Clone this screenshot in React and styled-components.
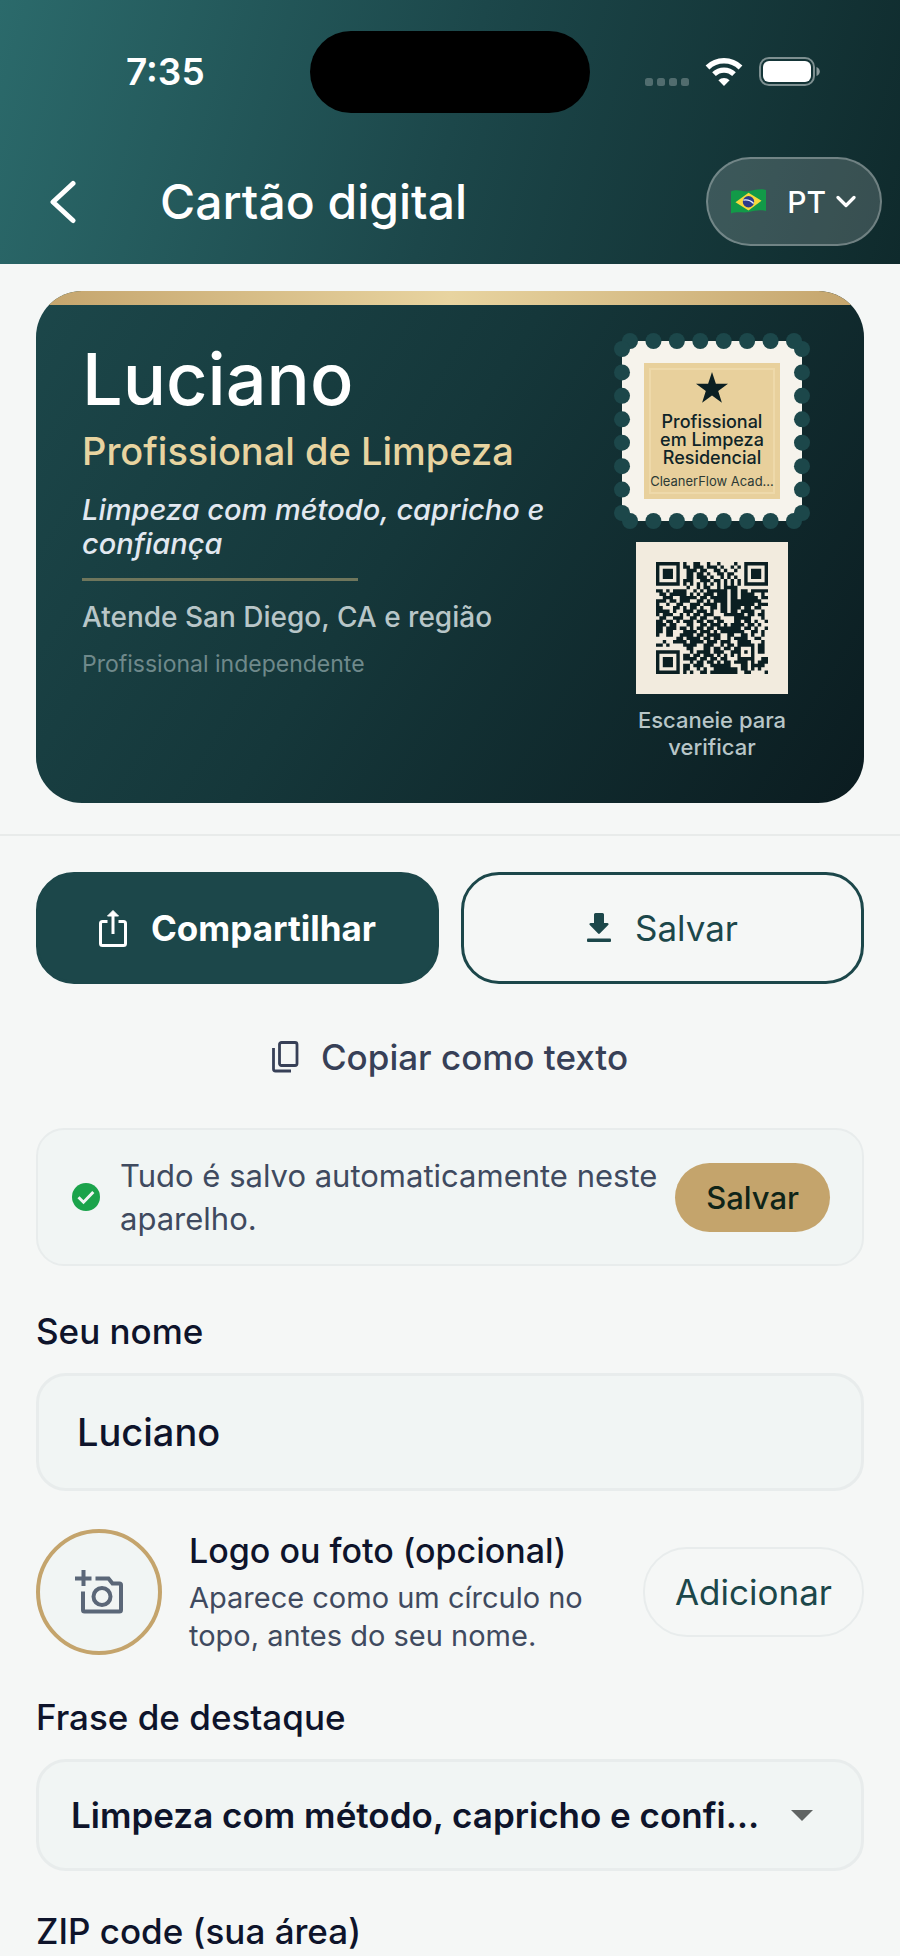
import React from "react";
import styled, { createGlobalStyle } from "styled-components";

const GlobalStyle = createGlobalStyle`
  * {
    box-sizing: border-box;
  }

  body {
    margin: 0;
    background: #f5f7f6;
    color: #0e142b;
    font-family: Inter, "Liberation Sans", sans-serif;
  }

  button,
  input,
  select {
    font-family: inherit;
    color: inherit;
    margin: 0;
  }

  button {
    cursor: pointer;
  }

  svg {
    display: block;
    flex-shrink: 0;
  }
`;

/* ---------- Header ---------- */

const Header = styled.header`
  padding: 31px 0 18px;
  color: #fff;
  background: linear-gradient(106deg, #2b6a6b 0%, #1c474a 50%, #0f2a2c 100%);
`;

const StatusBar = styled.div`
  display: grid;
  grid-template-columns: 1fr 280px 1fr;
  align-items: center;
  margin-bottom: 44px;
`;

const Clock = styled.time`
  padding-left: 126px;
  font-size: 37px;
  font-weight: 600;
  line-height: 44px;
`;

const Island = styled.div`
  height: 82px;
  border-radius: 41px;
  background: #000;
`;

const StatusIcons = styled.div`
  display: flex;
  align-items: center;
  justify-content: flex-end;
  gap: 16px;
  padding-right: 80px;
`;

const NavBar = styled.nav`
  display: flex;
  align-items: center;
  height: 89px;
  padding: 0 18px 0 48px;
`;

const BackButton = styled.button`
  display: flex;
  padding: 0;
  border: 0;
  background: none;
`;

const PageTitle = styled.h1`
  flex: 1;
  margin: 0 0 0 80px;
  font-size: 48px;
  font-weight: 500;
  line-height: 60px;
`;

const LanguageButton = styled.button`
  display: flex;
  align-items: center;
  height: 89px;
  padding: 0 24px 0 22px;
  border: 2px solid rgba(255, 255, 255, 0.28);
  border-radius: 45px;
  background: rgba(255, 255, 255, 0.17);
  color: #fff;
  font-size: 30px;
  font-weight: 500;

  span {
    margin: 0 10px 0 20px;
  }
`;

/* ---------- Business card ---------- */

const CardArea = styled.section`
  padding: 27px 36px 31px;
  border-bottom: 2px solid #e8ebea;
`;

const Card = styled.article`
  overflow: hidden;
  border-radius: 46px;
  background: linear-gradient(122deg, #1c474a 0%, #15373a 45%, #0b1c20 100%);

  &::before {
    content: "";
    display: block;
    height: 14px;
    background: linear-gradient(90deg, #c4a46c, #e8d4a0, #c4a46c);
  }
`;

const CardContent = styled.div`
  display: flex;
  justify-content: space-between;
  padding: 28px 46px 42px;
`;

const CardInfo = styled.div`
  flex: 1;
  min-width: 0;
`;

const CardName = styled.h2`
  margin: 0;
  color: #fff;
  font-size: 72px;
  font-weight: 500;
  line-height: 91px;
`;

const CardRole = styled.p`
  margin: 0;
  color: #e8d4a0;
  font-size: 38px;
  font-weight: 500;
  line-height: 54px;
`;

const CardTagline = styled.p`
  margin: 15px 0 17px;
  color: #e2e8f0;
  font-size: 29px;
  font-style: italic;
  font-weight: 500;
  line-height: 34px;
`;

const CardRule = styled.hr`
  width: 276px;
  height: 3px;
  margin: 0;
  border: 0;
  background: #6f765c;
`;

const CardRegion = styled.p`
  margin: 18px 0 15px;
  color: #b8c6c8;
  font-size: 28px;
  font-weight: 500;
  line-height: 36px;
`;

const CardNote = styled.p`
  margin: 0;
  color: #6f898b;
  font-size: 23px;
  line-height: 28px;
`;

const CardProof = styled.div`
  display: flex;
  flex-direction: column;
  align-items: center;
  gap: 13px;
  width: 212px;
`;

const StampBox = styled.div`
  display: grid;
  place-items: center;

  > * {
    grid-area: 1 / 1;
  }
`;

const StampText = styled.div`
  display: flex;
  flex-direction: column;
  align-items: center;
  color: #0f2428;
  font-size: 18px;
  font-weight: 500;
  line-height: 18px;
  text-align: center;

  svg {
    margin-bottom: 10px;
  }

  small {
    margin-top: 5px;
    color: #2c3a35;
    font-size: 13px;
    font-weight: 400;
    white-space: nowrap;
  }
`;

const QrBox = styled.div`
  padding: 20px;
  background: #f2ebde;
`;

const QrCaption = styled.p`
  margin: 0;
  color: #b8c6c8;
  font-size: 22px;
  font-weight: 500;
  line-height: 27px;
  text-align: center;
`;

/* ---------- Actions and form ---------- */

const Content = styled.main`
  padding: 36px 36px 5px;
`;

const ActionRow = styled.div`
  display: grid;
  grid-template-columns: 1fr 1fr;
  gap: 22px;
`;

const ActionButton = styled.button`
  display: flex;
  align-items: center;
  justify-content: center;
  gap: 24px;
  height: 112px;
  border: 3px solid #1c474a;
  border-radius: 38px;
  background: ${({ $filled }) => ($filled ? "#1c474a" : "transparent")};
  color: ${({ $filled }) => ($filled ? "#fff" : "#1c474a")};
  font-size: 35px;
  font-weight: ${({ $filled }) => ($filled ? 700 : 400)};
`;

const CopyButton = styled.button`
  display: flex;
  align-items: center;
  justify-content: center;
  gap: 22px;
  height: 60px;
  margin: 43px auto 41px;
  padding: 0;
  border: 0;
  background: none;
  color: #374057;
  font-size: 35px;
  font-weight: 500;
`;

const SaveNotice = styled.div`
  display: flex;
  align-items: center;
  margin-bottom: 43px;
  padding: 24px 32px 24px 34px;
  border: 2px solid #e8ecec;
  border-radius: 28px;
  background: #f1f5f4;

  p {
    flex: 1;
    margin: 0 12px 0 20px;
    color: #3f4a5f;
    font-size: 31px;
    line-height: 43px;
  }
`;

const SaveButton = styled.button`
  height: 69px;
  padding: 0 31px;
  border: 0;
  border-radius: 35px;
  background: #c4a46c;
  color: #0f2418;
  font-size: 31px;
  font-weight: 500;
`;

const Field = styled.div`
  margin-bottom: 38px;
`;

const FieldLabel = styled.label`
  display: block;
  margin-bottom: 20px;
  font-size: 35px;
  font-weight: 500;
  line-height: 44px;
`;

const TextInput = styled.input`
  display: block;
  width: 100%;
  height: 118px;
  padding: 0 38px;
  border: 3px solid #e8ecec;
  border-radius: 30px;
  background: #f1f5f4;
  font-size: 38px;
  font-weight: 500;
`;

const SelectShell = styled.div`
  display: flex;
  align-items: center;
  padding-right: 48px;
  border: 3px solid #e8ecec;
  border-radius: 30px;
  background: #f1f5f4;
`;

const Select = styled.select`
  flex: 1;
  min-width: 0;
  height: 106px;
  margin-right: 22px;
  padding: 0 0 0 32px;
  appearance: none;
  border: 0;
  background: none;
  font-size: 35px;
  font-weight: 600;
  overflow: hidden;
  text-overflow: ellipsis;
  white-space: nowrap;
`;

const PhotoRow = styled.div`
  display: flex;
  align-items: center;
  margin-bottom: 40px;
`;

const PhotoCircle = styled.div`
  display: grid;
  place-items: center;
  flex-shrink: 0;
  width: 126px;
  height: 126px;
  border: 4px solid #c4a46c;
  border-radius: 50%;
  background: #f1f5f4;
`;

const PhotoText = styled.div`
  flex: 1;
  margin: 0 28px 0 27px;

  h3 {
    margin: 0 0 7px;
    font-size: 34px;
    font-weight: 500;
    line-height: 42px;
  }

  p {
    margin: 0;
    color: #3f4a5f;
    font-size: 29px;
    line-height: 38px;
  }
`;

const AddButton = styled.button`
  height: 90px;
  padding: 0 30px;
  border: 2px solid #e8ecec;
  border-radius: 44px;
  background: none;
  color: #1c474a;
  font-size: 35px;
`;

/* ---------- Drawings ---------- */

function SignalDots() {
  return (
    <svg width="44" height="28" viewBox="0 0 44 28" fill="#fff" opacity="0.25">
      {[0, 12, 24, 36].map((x) => (
        <rect key={x} x={x} y="20" width="8" height="8" rx="2.5" />
      ))}
    </svg>
  );
}

function WifiIcon() {
  return (
    <svg width="38" height="28" viewBox="0 0 38 28" fill="none" stroke="#fff">
      <path d="M2.5 9.5a23.5 23.5 0 0 1 33 0" strokeWidth="5.4" />
      <path d="M9 16.2a14.2 14.2 0 0 1 20 0" strokeWidth="5.2" />
      <path d="M19 28l-5.6-5.8a8 8 0 0 1 11.2 0z" fill="#fff" stroke="none" />
    </svg>
  );
}

function BatteryIcon() {
  return (
    <svg width="61" height="30" viewBox="0 0 61 30">
      <rect x="1" y="1" width="54" height="27" rx="9" fill="none" stroke="#fff" strokeOpacity="0.45" strokeWidth="2" />
      <rect x="4" y="4" width="48" height="21" rx="6" fill="#fff" />
      <path d="M57.5 10v9c2-.8 3.3-2.500 3.3-4.500s-1.3-3.700-3.3-4.500z" fill="#fff" fillOpacity="0.5" />
    </svg>
  );
}

function BackIcon() {
  return (
    <svg width="32" height="44" viewBox="0 0 32 44" fill="none" stroke="#fff" strokeWidth="5" strokeLinecap="round" strokeLinejoin="round">
      <path d="M25 3.5L5 22l20 18.500" />
    </svg>
  );
}

function BrazilFlag() {
  return (
    <svg width="37" height="27" viewBox="0 0 37 27">
      <path d="M1 3.5C8 .5 13 4.500 19 3.200S31 .5 36 2v21c-6-1.600-11-.4-17 1S8 23 1 25.500z" fill="#129a48" />
      <path d="M18.5 4.800L31.500 12.800 18.500 22.600 5.500 14.200z" fill="#f7d93c" />
      <circle cx="18.5" cy="13.7" r="5.7" fill="#2d3a8c" />
      <path d="M13.3 12.200c4-.8 7.500.4 10.300 3.300" fill="none" stroke="#e9eefc" strokeWidth="1.3" />
    </svg>
  );
}

function ChevronDown() {
  return (
    <svg width="20" height="13" viewBox="0 0 20 13" fill="none" stroke="#fff" strokeWidth="3.2" strokeLinecap="round" strokeLinejoin="round">
      <path d="M2 2.5l8 8 8-8" />
    </svg>
  );
}

function Stamp() {
  const step = 164 / 7;
  const holes = Array.from({ length: 8 }, (_, i) => 16 + i * step);

  return (
    <svg width="196" height="196" viewBox="0 0 196 196">
      <rect x="8" y="8" width="180" height="180" fill="#f6f3ec" />
      <rect x="30" y="30" width="136" height="136" fill="#e8d09c" />
      <rect x="36" y="36" width="124" height="124" fill="none" stroke="#eed9aa" strokeWidth="2" />
      <g fill="#1c474a">
        {holes.map((p) => (
          <g key={p}>
            <circle cx={p} cy="8" r="8" />
            <circle cx={p} cy="188" r="8" />
            <circle cx="8" cy={p} r="8" />
            <circle cx="188" cy={p} r="8" />
          </g>
        ))}
      </g>
    </svg>
  );
}

function StarIcon() {
  return (
    <svg width="32" height="31" viewBox="0 0 32 31" fill="#0b1f22">
      <path d="M16 0l3.900 11.700H32l-9.800 7.300 3.700 11.800L16 23.600 6.100 30.800 9.800 19 0 11.700h12.100z" />
    </svg>
  );
}

const QR_ROWS = [
  "111111101001100100100001001111111",
  "100000101101110111010010101000001",
  "101110100111011001101001001011101",
  "101110100110110100110110001011101",
  "101110100110111010010101001011101",
  "100000101110011101101010101000001",
  "111111101010101010101010101111111",
  "000000000100101100101111000000000",
  "110101111001010111111011011011111",
  "011011111010101110111011011110010",
  "001110011111011011111011011111011",
  "111011011100110101111011111111100",
  "100100110011101111011011111110111",
  "110001101011010011011011101101100",
  "111101001110111010011011011110010",
  "101110010101101110001111110110110",
  "011001110011011001100001111100010",
  "110110101110110110110001101101001",
  "111011000110011011101011110110100",
  "110111011010110110111111101101001",
  "110110001111011101011111110011010",
  "100110011110110111100110011010010",
  "000000110111101101100101111001100",
  "001001111011110111011100111100010",
  "110100001111001110010110111110110",
  "000000000110001101101101100010110",
  "111111100010111101110011101010110",
  "100000101101101110101010100010000",
  "101110101111011011011000111110011",
  "101110100010110110101101111010111",
  "101110101101110011111100011011110",
  "100000101100101001111111011010100",
  "111111101010011011111111001100001",
];

function QrCode() {
  const d = QR_ROWS.map((row, y) =>
    [...row].map((cell, x) => (cell === "1" ? `M${x} ${y}h1v1h-1z` : "")).join("")
  ).join("");

  return (
    <svg width="112" height="112" viewBox="0 0 33 33" role="img" aria-label="QR code">
      <path d={d} fill="#0b1f22" />
    </svg>
  );
}

function ShareIcon() {
  return (
    <svg width="28" height="38" viewBox="0 0 28 38" fill="none" stroke="#fff" strokeWidth="3" strokeLinejoin="round">
      <path d="M8.5 12.500H3.500a2 2 0 0 0-2 2v20a2 2 0 0 0 2 2h21a2 2 0 0 0 2-2v-20a2 2 0 0 0-2-2h-5" />
      <path d="M14 25V4" />
      <path d="M14 1.500L19.500 7h-11z" fill="#fff" strokeWidth="1" />
    </svg>
  );
}

function DownloadIcon() {
  return (
    <svg width="24" height="30" viewBox="0 0 24 30" fill="#1c474a">
      <path d="M7 1.500A1.500 1.500 0 0 1 8.500 0h7A1.500 1.500 0 0 1 17 1.500V10h3.300c1.200 0 1.700 1.300.9 2.100l-8.400 8.500a1.200 1.200 0 0 1-1.700 0L2.800 12.100C2 11.300 2.500 10 3.700 10H7z" />
      <rect x="0" y="25.5" width="24" height="3.500" rx="1" />
    </svg>
  );
}

function CopyIcon() {
  return (
    <svg width="27" height="32" viewBox="0 0 27 32" fill="none" stroke="#374057" strokeWidth="2.8">
      <rect x="7.5" y="1.5" width="17.5" height="23" rx="2" />
      <path d="M1.500 7v21a2 2 0 0 0 2 2H19" />
    </svg>
  );
}

function CheckIcon() {
  return (
    <svg width="28" height="28" viewBox="0 0 28 28" fill="none">
      <circle cx="14" cy="14" r="14" fill="#1ba34b" />
      <path d="M6.500 14.200l5 5L21.300 9" stroke="#f1f5f4" strokeWidth="3" />
    </svg>
  );
}

function AddPhotoIcon() {
  return (
    <svg width="48" height="44" viewBox="0 0 48 44" fill="none" stroke="#5b6778" strokeWidth="4">
      <path d="M8.500 0v16M0 8.500h16.500" />
      <path d="M20.500 8.500h13l4 5h7a1.500 1.500 0 0 1 1.500 1.500v25a1.500 1.500 0 0 1-1.500 1.500h-35A1.500 1.500 0 0 1 8 40V21.500" />
      <circle cx="27" cy="26.500" r="8.500" />
    </svg>
  );
}

function ArrowDown() {
  return (
    <svg width="22" height="11" viewBox="0 0 22 11" fill="#606463">
      <path d="M0 0h22L11 11z" />
    </svg>
  );
}

/* ---------- Page ---------- */

function BusinessCard() {
  return (
    <Card>
      <CardContent>
        <CardInfo>
          <CardName>Luciano</CardName>
          <CardRole>Profissional de Limpeza</CardRole>
          <CardTagline>Limpeza com método, capricho e confiança</CardTagline>
          <CardRule />
          <CardRegion>Atende San Diego, CA e região</CardRegion>
          <CardNote>Profissional independente</CardNote>
        </CardInfo>
        <CardProof>
          <StampBox>
            <Stamp />
            <StampText>
              <StarIcon />
              <span>Profissional</span>
              <span>em Limpeza</span>
              <span>Residencial</span>
              <small>CleanerFlow Acad...</small>
            </StampText>
          </StampBox>
          <QrBox>
            <QrCode />
          </QrBox>
          <QrCaption>
            Escaneie para
            <br />
            verificar
          </QrCaption>
        </CardProof>
      </CardContent>
    </Card>
  );
}

export default function App() {
  return (
    <>
      <GlobalStyle />
      <Header>
        <StatusBar>
          <Clock>7:35</Clock>
          <Island />
          <StatusIcons>
            <SignalDots />
            <WifiIcon />
            <BatteryIcon />
          </StatusIcons>
        </StatusBar>
        <NavBar>
          <BackButton type="button" aria-label="Voltar">
            <BackIcon />
          </BackButton>
          <PageTitle>Cartão digital</PageTitle>
          <LanguageButton type="button">
            <BrazilFlag />
            <span>PT</span>
            <ChevronDown />
          </LanguageButton>
        </NavBar>
      </Header>

      <CardArea>
        <BusinessCard />
      </CardArea>

      <Content>
        <ActionRow>
          <ActionButton type="button" $filled>
            <ShareIcon />
            Compartilhar
          </ActionButton>
          <ActionButton type="button">
            <DownloadIcon />
            Salvar
          </ActionButton>
        </ActionRow>
        <CopyButton type="button">
          <CopyIcon />
          Copiar como texto
        </CopyButton>

        <SaveNotice>
          <CheckIcon />
          <p>Tudo é salvo automaticamente neste aparelho.</p>
          <SaveButton type="button">Salvar</SaveButton>
        </SaveNotice>

        <Field>
          <FieldLabel htmlFor="name">Seu nome</FieldLabel>
          <TextInput id="name" type="text" defaultValue="Luciano" />
        </Field>

        <PhotoRow>
          <PhotoCircle>
            <AddPhotoIcon />
          </PhotoCircle>
          <PhotoText>
            <h3>Logo ou foto (opcional)</h3>
            <p>Aparece como um círculo no topo, antes do seu nome.</p>
          </PhotoText>
          <AddButton type="button">Adicionar</AddButton>
        </PhotoRow>

        <Field>
          <FieldLabel htmlFor="tagline">Frase de destaque</FieldLabel>
          <SelectShell>
            <Select id="tagline">
              <option>Limpeza com método, capricho e confiança</option>
            </Select>
            <ArrowDown />
          </SelectShell>
        </Field>

        <FieldLabel as="div">ZIP code (sua área)</FieldLabel>
      </Content>
    </>
  );
}
